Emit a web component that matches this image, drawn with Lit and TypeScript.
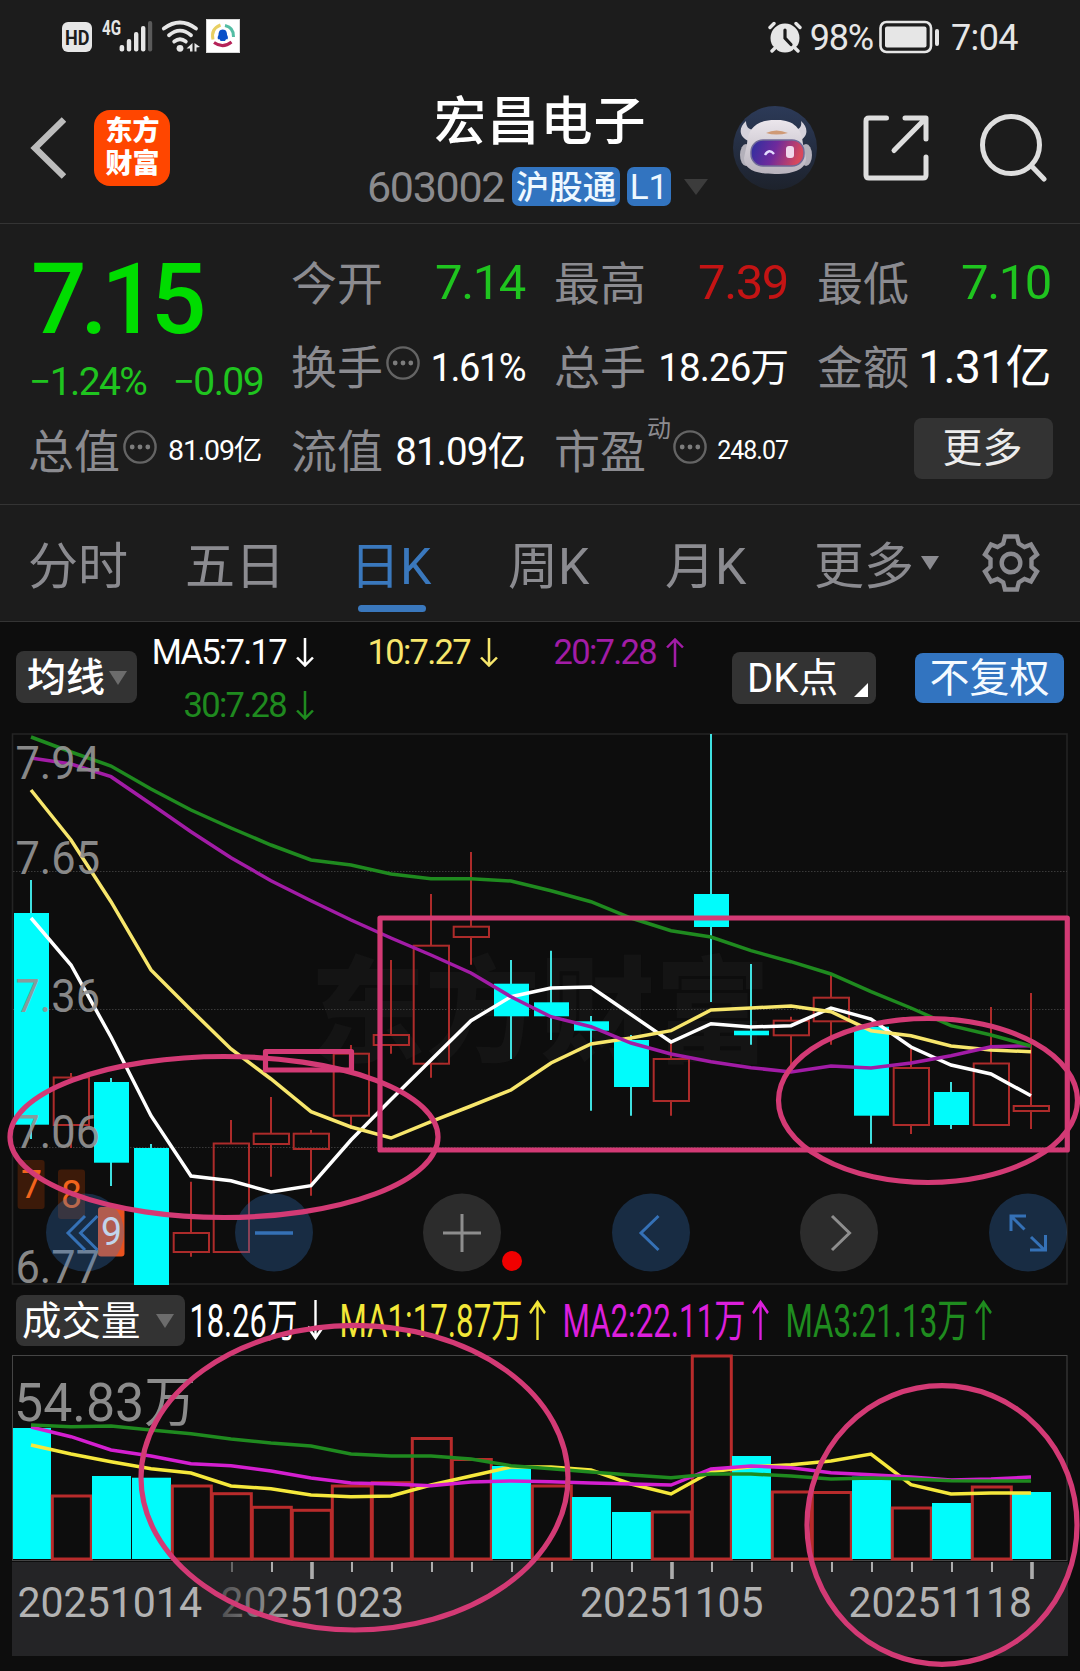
import { LitElement, html, css, svg } from "lit";
import { customElement, property } from "lit/decorators.js";

const FONT = css`Roboto, "Noto Sans CJK SC", sans-serif`;

/** x position of the nth trading day */
const cx = (i: number) => 31 + 40 * i;

type Candle = [up: 0 | 1, high: number, top: number, bottom: number, low: number];

const CANDLES: Candle[] = [
  [0, 880, 913, 1124.7, 1139], [1, 1073, 1077.5, 1125, 1148], [0, 1078, 1082, 1162.7, 1186],
  [0, 1144, 1148, 1285, 1285], [1, 1181.7, 1233, 1252, 1256.7], [1, 1120, 1143.5, 1252, 1252],
  [1, 1097, 1133.7, 1144, 1176.7], [1, 1130, 1133.7, 1149, 1195.7], [1, 1045, 1053.7, 1115.7, 1129],
  [1, 960, 1035, 1045, 1053.7], [1, 894, 945.7, 1063.7, 1077.7], [1, 852, 926.7, 937, 964.7],
  [0, 960, 983.7, 1016.3, 1059], [0, 950.7, 1002.3, 1016.3, 1040], [0, 1016, 1021.3, 1030.7, 1110.7],
  [0, 1035, 1040, 1087, 1115.7], [1, 1042, 1059, 1101, 1115.7], [0, 734, 894, 927, 1002],
  [0, 964, 1030.7, 1035.3, 1044.7], [1, 1016.7, 1020.7, 1035.3, 1067], [1, 975, 997.7, 1021.3, 1044.7],
  [0, 1026, 1026.7, 1115.7, 1143.7], [1, 1049, 1068, 1125, 1134], [0, 1082, 1092, 1125, 1129],
  [1, 1007, 1063.5, 1125, 1125], [1, 993, 1106, 1111, 1129],
];

const PRICE_LINES: [string, number[]][] = [
  ["#ffffff", [918, 965, 1037, 1115.7, 1176, 1180.7, 1192, 1185.7, 1140, 1099.5, 1060, 1020.7, 996.7, 988, 987, 1014.5, 1042, 1023.7, 1027, 1025.7, 1008, 1019, 1047, 1065, 1074, 1095.7]],
  ["#f7e66c", [790, 840, 901.7, 970, 1010, 1049, 1079, 1111.7, 1127, 1138, 1121.7, 1106, 1090, 1063, 1044, 1038, 1030.7, 1010, 1008, 1006, 1011.7, 1030.7, 1035.7, 1046, 1050, 1051.7]],
  ["#a21ca6", [758, 764, 776.7, 804, 831.7, 857.7, 880.7, 900.7, 920, 938, 955, 973, 996.7, 1016.7, 1026.7, 1043, 1054, 1061.7, 1067.7, 1072, 1066, 1068, 1063, 1055.7, 1046.7, 1045.7]],
  ["#1f8a1f", [737, 752, 766, 789, 810, 828, 845, 860, 865, 874, 878.7, 878.7, 881, 890.7, 901.7, 918, 930.7, 937, 950.7, 961.7, 974, 991.7, 1008, 1025.7, 1035, 1046]],
];

/** [up, top] for each volume bar */
const VOLUMES: [0 | 1, number][] = [
  [0, 1428], [1, 1496], [0, 1476], [0, 1477.7], [1, 1486], [1, 1493.7], [1, 1507.3], [1, 1510.3],
  [1, 1486], [1, 1482.7], [1, 1438.5], [1, 1459.5], [0, 1466], [1, 1486], [0, 1497], [0, 1512],
  [1, 1512], [1, 1356], [0, 1456], [1, 1492], [1, 1492.5], [0, 1476.7], [1, 1508], [0, 1503],
  [1, 1487], [0, 1492],
];

const VOLUME_LINES: [string, number[]][] = [
  ["#f5e83c", [1445, 1454, 1461.7, 1468.7, 1473, 1486, 1488.7, 1495, 1496.7, 1496, 1485, 1476, 1467, 1467, 1470, 1484, 1494, 1471.7, 1466.7, 1464.7, 1461, 1454, 1484.7, 1494, 1493, 1493]],
  ["#d41fd0", [1427, 1436.7, 1450, 1456, 1463.7, 1465.7, 1471, 1478, 1483, 1484, 1485.7, 1482, 1481, 1481.7, 1483, 1484, 1485, 1469, 1466, 1467.7, 1472.7, 1474.7, 1477, 1480, 1479, 1477]],
  ["#1f8a1f", [1425, 1426.7, 1426, 1430, 1433.7, 1439, 1443, 1446, 1454, 1456, 1456, 1459, 1465.7, 1468.7, 1472, 1475, 1477.7, 1474, 1474, 1476, 1479, 1478, 1479, 1480.7, 1481, 1481]],
];

const polyline = ([color, ys]: [string, number[]]) => svg`
  <polyline fill="none" stroke=${color} stroke-width="3.500" points=${ys.map((y, i) => `${cx(i)},${y}`).join(" ")} />`;

const label = (x: number, y: number, size: number, len: number, text: string, fill: string) => svg`
  <text x=${x} y=${y} font-size=${size} textLength=${len} lengthAdjust="spacingAndGlyphs" fill=${fill}>${text}</text>`;

const arrow = (up: boolean, width: number, height: number) => html`
  <svg width=${width} height=${height} viewBox="0 0 17 29" preserveAspectRatio="none" fill="none" stroke="currentColor" stroke-width="2.4">
    ${up ? svg`<path d="M8.5 29V1.5M1 9.5L8.5 1.5L16 9.5" />` : svg`<path d="M8.5 0V27.5M1 19.5L8.5 27.5L16 19.5" />`}
  </svg>`;

const dots = html`
  <svg class="dots" width="34" height="34" viewBox="0 0 34 34">
    <circle cx="17" cy="17" r="15.6" fill="none" stroke="#646464" stroke-width="2.4" />
    <g fill="#7c7c7c"><circle cx="9.2" cy="17" r="2.4" /><circle cx="17" cy="17" r="2.4" /><circle cx="24.8" cy="17" r="2.4" /></g>
  </svg>`;

@customElement("status-bar")
class StatusBar extends LitElement {
  static styles = css`
    :host { display: flex; height: 72px; box-sizing: border-box; padding: 19px 62px 0 62px; font-family: ${FONT}; color: #e6e6e6; }
    .left { flex: 1; }
    .left svg { overflow: visible; }
    .right { display: flex; align-items: center; height: 35px; font-size: 36px; line-height: 35px; }
    .pct { margin: 3px 6px 0 8px; letter-spacing: -1.2px; }
    .time { margin: 3px 0 0 11px; letter-spacing: -0.6px; }
    text { font-family: ${FONT}; }
  `;
  render() {
    return html`
      <div class="left">
        <svg width="180" height="36" viewBox="62 19 180 36" fill="#e6e6e6">
          <rect x="62" y="22" width="30" height="30" rx="6" />
          <text x="65" y="44.500" font-size="19.500" font-weight="700" fill="#1c1c1c" textLength="24.500" lengthAdjust="spacingAndGlyphs">HD</text>
          <text x="102" y="35" font-size="20" font-weight="700" textLength="19" lengthAdjust="spacingAndGlyphs">4G</text>
          <rect x="119.6" y="45" width="4.6" height="6.5" rx="2" />
          <rect x="126.8" y="39" width="4.4" height="12.5" rx="2" />
          <rect x="134" y="32" width="4.4" height="19.5" rx="2" />
          <rect x="141" y="26" width="4.4" height="25.5" rx="2" />
          <rect x="148" y="21" width="4.2" height="30.5" rx="2" fill="#5a5a5a" />
          <g fill="none" stroke="#e6e6e6" stroke-width="3.8" stroke-linecap="round">
            <path d="M163.8 28.5Q180 16.500 196 28.500" />
            <path d="M169 35.200Q180 26 191 35.200" />
            <path d="M174.200 41.500Q180 37 185.800 41.500" />
          </g>
          <circle cx="180" cy="48.300" r="3.400" />
          <path d="M192.500 43V51.500H190V48.500H186.500ZM194.500 51.500V43L200 47L196.500 47.500V51.500Z" />
          <rect x="206.500" y="19.500" width="33" height="33" fill="#fff" stroke="#d8d8d8" />
          <g fill="none" stroke-width="3">
            <path d="M220.500 25Q210.500 29 213 39.500" stroke="#e8cf62" />
            <path d="M225 25.500Q234 27.500 233.500 37" stroke="#53bda4" />
            <path d="M214 42.500Q223 49 231.500 42" stroke="#b52258" />
          </g>
          <path d="M222.800 29.500c3.600 0 4.200 3 4.300 5.400c1 1.800 1 3 .5 4.400h-1.600l-1 1.600h-4.400l-1-1.600h-1.600c-.5-1.400-.5-2.600 .5-4.400c.1-2.400 .7-5.400 4.300-5.400z" fill="#0a50c8" />
        </svg>
      </div>
      <div class="right">
        <svg width="34" height="32" viewBox="0 0 34 32">
          <circle cx="17" cy="17" r="14.500" fill="#e6e6e6" />
          <path d="M1.500 7L6.500 2M32.500 7L27.500 2M4 30L7 27M30 30L27 27" stroke="#1c1c1c" stroke-width="6" />
          <path d="M2 6.500L6 2.500M32 6.500L28 2.500M4 30L7 27M30 30L27 27" stroke="#e6e6e6" stroke-width="3.400" stroke-linecap="round" />
          <path d="M17 9V17L23 23.500" fill="none" stroke="#1c1c1c" stroke-width="3.200" stroke-linecap="round" />
        </svg>
        <span class="pct">98%</span>
        <svg width="61" height="34" viewBox="0 0 61 34">
          <rect x="1.500" y="2" width="50.500" height="30" rx="6" fill="none" stroke="#e6e6e6" stroke-width="2.600" />
          <rect x="6" y="6.500" width="41.500" height="21" rx="2" fill="#e6e6e6" />
          <rect x="56" y="9" width="4" height="17" rx="2" fill="#e6e6e6" />
        </svg>
        <span class="time">7:04</span>
      </div>`;
  }
}

@customElement("stock-header")
class StockHeader extends LitElement {
  static styles = css`
    :host { display: grid; grid-template-columns: 340px 392.500px 1fr; height: 151px; border-bottom: 1px solid #343434; font-family: ${FONT}; }
    .left, .right { display: flex; align-items: center; }
    .left { padding-left: 30px; gap: 28px; }
    .logo { display: grid; width: 76px; height: 76px; box-sizing: border-box; padding: 1px 0 0 1px; align-content: center; justify-content: center; border-radius: 16px; background: #ff4600; color: #fff; font-size: 27px; line-height: 33px; font-weight: 900; }
    .center { display: flex; flex-direction: column; }
    .name { margin: 22px 0 0 94px; height: 56px; line-height: 58px; font-size: 52px; font-weight: 500; letter-spacing: 1.200px; color: #fff; white-space: nowrap; }
    .meta { display: flex; align-items: center; margin: 17px 0 0 27px; height: 39px; }
    .code { width: 145px; font-size: 43px; line-height: 41px; margin-top: 2px; letter-spacing: -1.300px; color: #8b8b8e; }
    .badge { height: 39px; box-sizing: border-box; border-radius: 7px; background: #3274c0; color: #eef8ff; font-size: 33.500px; line-height: 41px; text-align: center; font-weight: 500; }
    .hk { width: 108px; }
    .l1 { width: 44px; margin: 0 12px 0 7px; font-weight: 400; font-size: 35px; line-height: 41px; }
    .robot { margin-right: 46.500px; }
    .share { margin-right: 50.500px; }
  `;
  render() {
    return html`
      <div class="left">
        <svg width="36" height="62" viewBox="0 0 36 62" fill="none" stroke="#bcbcbc" stroke-width="6.500"><path d="M34 2.500L5 31L34 59.500" /></svg>
        <div class="logo"><span>东方</span><span>财富</span></div>
      </div>
      <div class="center">
        <div class="name">宏昌电子</div>
        <div class="meta">
          <span class="code">603002</span>
          <span class="badge hk">沪股通</span><span class="badge l1">L1</span>
          <svg width="26" height="18" viewBox="0 0 26 18"><path d="M1 1H25L13 17Z" fill="#3c3c3c" /></svg>
        </div>
      </div>
      <div class="right">
        <svg class="robot" width="84" height="84" viewBox="0 0 84 84">
          <defs>
            <linearGradient id="sky" x1="0" y1="0" x2="0" y2="1"><stop offset="0" stop-color="#2c3a58" /><stop offset="1" stop-color="#1d222c" /></linearGradient>
            <linearGradient id="visor" x1="0" y1="0" x2="1" y2="0.200"><stop offset="0" stop-color="#2b30a0" /><stop offset=".5" stop-color="#6e2a9c" /><stop offset="1" stop-color="#d8485c" /></linearGradient>
            <linearGradient id="shell" x1="0" y1="0" x2="0" y2="1"><stop offset="0" stop-color="#ebe6ec" /><stop offset="1" stop-color="#b8b3bd" /></linearGradient>
          </defs>
          <circle cx="42" cy="42" r="42" fill="url(#sky)" />
          <path d="M13 15C5 22 6 31 16 35L22 24C15 24 13 20 13 15ZM68 15C76 22 75 31 66 35L61 24C67 24 69 20 68 15Z" fill="#d5d2dc" />
          <ellipse cx="13" cy="49" rx="6" ry="11" fill="#b3b0ba" /><ellipse cx="73" cy="49" rx="6" ry="11" fill="#b3b0ba" />
          <path d="M42 14C60 13 69 22 70 38L73 52C73 62 64 68 42 68C20 68 11 62 11 52L14 38C15 22 24 14 42 14Z" fill="url(#shell)" />
          <path d="M33 27Q43 22 55 27Q43 30 33 27Z" fill="#cf9a76" />
          <rect x="18" y="34" width="53" height="26" rx="12" fill="url(#visor)" stroke="#6f6a98" stroke-width="1.500" />
          <path d="M32 49Q36 42 41 48" fill="none" stroke="#e4dcff" stroke-width="2.400" />
          <rect x="53" y="40" width="8" height="12" rx="3" fill="#f0d8ec" />
        </svg>
        <svg class="share" width="66" height="66" viewBox="0 0 66 66" fill="none" stroke="#dedede" stroke-width="5" stroke-linecap="round" stroke-linejoin="round">
          <path d="M23.500 3H6Q3 3 3 6V60Q3 63 6 63H60Q63 63 63 60V42M42 3H63V24M62 4L31 35.500" />
        </svg>
        <svg width="67" height="68" viewBox="0 0 67 68" fill="none" stroke="#dedede" stroke-width="5" stroke-linecap="round">
          <circle cx="31" cy="31" r="28.500" /><path d="M52 52.500L64 65" />
        </svg>
      </div>`;
  }
}

@customElement("quote-cell")
class QuoteCell extends LitElement {
  @property() name = "";
  @property() value = "";
  @property() sup = "";
  @property({ type: Boolean }) info = false;
  @property() size = "l";
  @property() tone = "";
  static styles = css`
    :host { display: flex; align-items: center; height: 84px; font-family: ${FONT}; white-space: nowrap; }
    .name { font-size: 46px; line-height: 80px; color: #8b8b90; margin: 5px 0 0 -1px; }
    .dots { margin: -5px 0 0 3px; }
    .sup { font-size: 24px; line-height: 24px; margin: -41px -1px 0 1px; color: #8b8b90; }
    .value { flex: 1; text-align: right; color: #fff; line-height: 80px; }
    .l { font-size: 49px; letter-spacing: -1.400px; margin: 3px 1px 0 0; }
    .m { font-size: 46px; letter-spacing: -0.600px; margin: 3px 1px 0 0; }
    .p { font-size: 38px; letter-spacing: -1.500px; margin: 4px 1px 0 0; }
    .s { font-size: 38.500px; letter-spacing: -0.900px; margin: 4px 1px 0 0; }
    .xs { font-size: 28.500px; letter-spacing: -1.200px; margin: 2px 2px 0 0; }
    .xxs { font-size: 25px; letter-spacing: -1px; margin: 2px 1px 0 0; }
    .up { color: #c41414; }
    .down { color: #1fc41f; }
  `;
  render() {
    return html`
      <span class="name">${this.name}</span>
      ${this.sup ? html`<span class="sup">${this.sup}</span>` : ""}
      ${this.info ? dots : ""}
      <span class="value ${this.size} ${this.tone}">${this.value}</span>`;
  }
}

@customElement("quote-panel")
class QuotePanel extends LitElement {
  static styles = css`
    :host { display: grid; grid-template-columns: repeat(4, 234px); grid-template-rows: repeat(3, 84px); column-gap: 29px; height: 281px; box-sizing: border-box; padding: 15.500px 29px 0; border-bottom: 1px solid #343434; font-family: ${FONT}; }
    .price { grid-row: span 2; display: flex; flex-direction: column; }
    .last { height: 117px; line-height: 119px; padding-left: 2px; font-size: 98px; font-weight: 500; letter-spacing: -6.300px; color: #00dc00; }
    .change { display: flex; justify-content: space-between; font-size: 39px; line-height: 50px; letter-spacing: -1.600px; color: #1fc41f; }
    .more { justify-self: end; align-self: center; width: 139px; height: 61px; margin: -2px -1px 0 0; box-sizing: border-box; border-radius: 8px; background: #333; color: #ececec; font-size: 40px; line-height: 62px; text-align: center; padding-right: 2px; }
  `;
  render() {
    return html`
      <div class="price">
        <span class="last">7.15</span>
        <div class="change"><span>−1.24%</span><span>−0.09</span></div>
      </div>
      <quote-cell name="今开" value="7.14" tone="down"></quote-cell>
      <quote-cell name="最高" value="7.39" tone="up"></quote-cell>
      <quote-cell name="最低" value="7.10" tone="down"></quote-cell>
      <quote-cell name="换手" info value="1.61%" size="p"></quote-cell>
      <quote-cell name="总手" value="18.26万" size="s"></quote-cell>
      <quote-cell name="金额" value="1.31亿" size="m"></quote-cell>
      <quote-cell name="总值" info value="81.09亿" size="xs"></quote-cell>
      <quote-cell name="流值" value="81.09亿" size="s"></quote-cell>
      <quote-cell name="市盈" sup="动" info value="248.07" size="xxs"></quote-cell>
      <div class="more">更多</div>`;
  }
}

@customElement("period-tabs")
class PeriodTabs extends LitElement {
  static styles = css`
    :host { display: flex; align-items: center; height: 117px; box-sizing: border-box; padding-left: 28px; border-bottom: 1px solid #343434; font-family: ${FONT}; font-size: 50px; color: #8b8b90; white-space: nowrap; }
    .tab { height: 116px; line-height: 124px; box-sizing: border-box; }
    .t0 { width: 157px; }
    .t1 { width: 165px; }
    .t2 { width: 158px; }
    .t3 { width: 157px; }
    .t4 { width: 149px; }
    .t5 { width: 107px; }
    .active { display: flex; flex-direction: column; color: #3a78bd; }
    .active .label { height: 100px; }
    .bar { width: 68px; height: 7px; margin-left: 8px; border-radius: 4px; background: #3a78bd; }
    .caret { margin: 0 43px 0 0; }
  `;
  render() {
    const tabs = ["分时", "五日", "日K", "周K", "月K", "更多"];
    return html`
      ${tabs.map((t, i) => i === 2
        ? html`<div class="tab t2 active"><span class="label">${t}</span><span class="bar"></span></div>`
        : html`<div class="tab t${i}">${t}</div>`)}
      <svg class="caret" width="18" height="14" viewBox="0 0 18 14"><path d="M0 0H18L9 14Z" fill="#8b8b90" /></svg>
      <svg width="58" height="60" viewBox="-29 -30 58 60" fill="none" stroke="#8b8b90" stroke-width="4.400">
        <path d="M-6 -26.500H6L7.800 -19.500L13.500 -16L20 -18.500L26 -8.500L20.500 -4V4L26 8.500L20 18.500L13.500 16L7.800 19.500L6 26.500H-6L-7.800 19.500L-13.500 16L-20 18.500L-26 8.500L-20.500 4V-4L-26 -8.500L-20 -18.500L-13.500 -16L-7.800 -19.500Z" />
        <circle r="9.300" />
      </svg>`;
  }
}

@customElement("ma-legend")
class MaLegend extends LitElement {
  static styles = css`
    :host { display: flex; height: 100px; box-sizing: border-box; padding: 0 16px; font-family: ${FONT}; color: #fff; white-space: nowrap; }
    .btn { display: flex; align-items: center; box-sizing: border-box; border-radius: 8px; background: #333; font-size: 39px; line-height: 50px; height: 52px; padding-top: 2px; }
    .ma { width: 121px; margin-top: 29px; padding-left: 11px; gap: 4px; font-weight: 500; }
    .values { display: grid; grid-template-columns: 177px 184px 186px; grid-template-rows: 53px 53px; justify-items: end; width: 547px; margin-top: 4px; font-size: 34.500px; line-height: 53px; letter-spacing: -1.700px; }
    .v { display: flex; align-items: center; gap: 10px; }
    .v svg { margin-top: -1px; }
    .white { color: #fff; }
    .yellow { color: #f7e66c; }
    .purple { color: #a21ca6; }
    .green { color: #1f8a1f; }
    .dk { width: 144px; margin: 30px 39px 0 48px; padding: 2px 8px 0 15px; justify-content: space-between; font-size: 40px; }
    .dk svg { margin-top: 22px; }
    .fq { width: 149px; height: 50px; margin-top: 31px; justify-content: center; background: #3274c0; font-size: 40px; line-height: 48px; color: #f4faff; }
  `;
  render() {
    return html`
      <div class="btn ma">均线<svg width="18" height="14" viewBox="0 0 18 14"><path d="M0 0H18L9 14Z" fill="#6c6c6c" /></svg></div>
      <div class="values">
        <span class="v white">MA5:7.17${arrow(false, 18, 29)}</span>
        <span class="v yellow">10:7.27${arrow(false, 18, 29)}</span>
        <span class="v purple">20:7.28${arrow(true, 18, 29)}</span>
        <span class="v green">30:7.28${arrow(false, 18, 29)}</span>
      </div>
      <div class="btn dk">DK点<svg width="14" height="14" viewBox="0 0 14 14"><path d="M14 0V14H0Z" fill="#fff" /></svg></div>
      <div class="btn fq">不复权</div>`;
  }
}

@customElement("price-chart")
class PriceChart extends LitElement {
  static styles = css`
    :host { display: block; height: 568px; }
    svg { display: block; overflow: visible; font-family: ${FONT}; }
  `;
  render() {
    return html`
      <svg width="1080" height="568" viewBox="0 722 1080 568">
        <text x="310" y="1053" font-size="115" font-weight="900" fill="#141414" textLength="460">东方财富</text>
        <rect x="12.500" y="734" width="1054.500" height="550" fill="none" stroke="#242424" stroke-width="1.600" />
        ${[871.5, 1009.5, 1147.5].map((y) => svg`<path d="M13 ${y}H1067" stroke="#3a3a3a" stroke-width="1" stroke-dasharray="1.500 1.500" />`)}
        ${CANDLES.map(([up, high, top, bottom, low], i) => up
          ? svg`<g fill="none" stroke="#ac2b2a" stroke-width="2">
              <path d="M${cx(i)} ${high}V${top}M${cx(i)} ${bottom}V${low}" />
              <rect x=${cx(i) - 17.3} y=${top} width="35.300" height=${bottom - top} /></g>`
          : svg`<path d="M${cx(i)} ${high}V${low}" stroke="#3fe0e0" stroke-width="2" />
              <rect x=${cx(i) - 17} y=${top} width="35" height=${bottom - top} fill="#00fcfc" />`)}
        ${PRICE_LINES.map(polyline)}
        <g>
          <rect x="17.600" y="1160" width="27" height="49" rx="3" fill="#3c1a09" />
          <rect x="58" y="1169.500" width="27" height="49.500" rx="3" fill="#3c1a09" />
          <rect x="98" y="1207" width="26.500" height="49.500" rx="3" fill="#e8521f" />
          ${label(21, 1198, 38, 21, "7", "#f2641c")}
          ${label(61, 1208, 38, 21, "8", "#f2641c")}
          ${label(101, 1245, 38, 21, "9", "#ffffff")}
        </g>
        <g opacity=".92">
          ${label(15.5, 778.7, 45.5, 84.5, "7.94", "#939393")}
          ${label(15.5, 873.5, 45.5, 84.5, "7.65", "#939393")}
          ${label(15.5, 1012, 45.5, 84.5, "7.36", "#939393")}
          ${label(15.5, 1148.3, 45.5, 84.5, "7.06", "#939393")}
          ${label(15.5, 1283, 45.5, 84.5, "6.77", "#939393")}
        </g>
        <g fill="rgb(50 116 192 / .3)">
          <circle cx="85" cy="1232.500" r="39" />
          <circle cx="274" cy="1232.500" r="39" />
          <circle cx="651" cy="1232.500" r="39" />
          <circle cx="1028" cy="1232.500" r="39" />
        </g>
        <g fill="rgb(255 255 255 / .13)"><circle cx="462" cy="1232.500" r="39" /><circle cx="839" cy="1232.500" r="39" /></g>
        <g fill="none" stroke="#3571b6" stroke-width="3">
          <path d="M85 1216L68 1233L85 1250M97.500 1216L80.500 1233L97.500 1250" />
          <path d="M255 1233H293" stroke-width="3.600" />
          <path d="M658.500 1216L641 1233L658.500 1250" />
          <path d="M1011 1231V1216H1026M1011.500 1216.500L1024.500 1229.500M1031 1237L1045 1250.500M1030 1250H1045.500V1235" />
        </g>
        <g fill="none" stroke="#8e8e8e" stroke-width="3"><path d="M443 1233H481M462 1214V1252" /><path d="M832 1216L849.500 1233L832 1250" /></g>
        <circle cx="512" cy="1261" r="10" fill="#f00000" />
      </svg>`;
  }
}

@customElement("volume-legend")
class VolumeLegend extends LitElement {
  static styles = css`
    :host { display: flex; align-items: center; height: 60px; box-sizing: border-box; padding: 0 16px; font-family: ${FONT}; }
    .btn { display: flex; align-items: center; justify-content: space-between; width: 169px; height: 51px; box-sizing: border-box; padding: 2px 11px 0 6px; border-radius: 8px; background: #333; color: #fff; font-size: 39.500px; line-height: 49px; }
    svg { display: block; overflow: visible; font-family: ${FONT}; }
    .item { display: flex; align-items: center; gap: 6.500px; }
    .i0 { width: 149.500px; margin-left: 4px; gap: 9px; color: #fff; }
    .i1 { width: 223px; color: #f3e738; }
    .i2 { width: 223px; color: #dc1fdc; }
    .i3 { color: #1f8c1f; }
  `;
  item(cls: string, text: string, width: number, up: boolean) {
    const squeeze = 0.69;
    return html`<span class="item ${cls}">
      <svg width=${width} height="54" viewBox="0 0 ${width} 54">
        <g transform="translate(0.500 43.500) scale(${squeeze} 1)">${label(0, 0, 45.5, (width - 1) / squeeze, text, "currentColor")}</g>
      </svg>
      ${arrow(up, 17, 40)}</span>`;
  }
  render() {
    return html`
      <div class="btn">成交量<svg width="18" height="14" viewBox="0 0 18 14"><path d="M0 0H18L9 14Z" fill="#6c6c6c" /></svg></div>
      ${this.item("i0", "18.26万", 109, false)}
      ${this.item("i1", "MA1:17.87万", 184, true)}
      ${this.item("i2", "MA2:22.11万", 184, true)}
      ${this.item("i3", "MA3:21.13万", 184, true)}`;
  }
}

@customElement("volume-chart")
class VolumeChart extends LitElement {
  static styles = css`
    :host { display: block; height: 321px; }
    svg { display: block; font-family: ${FONT}; }
  `;
  render() {
    const ticks = Array.from({ length: 21 }, (_, k) => k + 5);
    return html`
      <svg width="1080" height="321" viewBox="0 1350 1080 321">
        <defs><linearGradient id="fade" gradientUnits="userSpaceOnUse" x1="215" y1="0" x2="300" y2="0"><stop offset="0" stop-color="#48484a" /><stop offset="1" stop-color="#b2b2b2" /></linearGradient></defs>
        <rect x="12.500" y="1355.500" width="1054.500" height="205" fill="none" stroke="#454545" stroke-width="1" />
        ${label(14, 1420.5, 54.5, 182, "54.83万", "#8c8c8c")}
        ${VOLUMES.map(([up, top], i) => up
          ? svg`<rect x=${cx(i) - 18.7} y=${top} width="39" height=${1559 - top} fill="none" stroke="#b82b2b" stroke-width="3" />`
          : svg`<rect x=${i ? cx(i) - 19 : 13} y=${top} width=${i ? 39 : 38} height=${1559 - top} fill="#00fcfc" />`)}
        ${VOLUME_LINES.map(polyline)}
        <rect x="12" y="1562" width="1056" height="94" fill="#242426" />
        ${ticks.map((i) => {
          const major = i % 9 === 7;
          return svg`<rect x=${cx(i) + (major ? -0.8 : 0)} y="1562" width=${major ? 3.6 : 2} height=${major ? 17 : 10} fill=${i === 5 ? "#666" : "#adadad"} />`;
        })}
        ${label(17.5, 1617.3, 42.5, 184.5, "20251014", "#b2b2b2")}
        ${label(220.5, 1617.3, 42.5, 183.5, "20251023", "url(#fade)")}
        ${label(580, 1617.3, 42.5, 183.5, "20251105", "#b2b2b2")}
        ${label(848.5, 1617.3, 42.5, 183.5, "20251118", "#b2b2b2")}
      </svg>`;
  }
}

@customElement("app-root")
class AppRoot extends LitElement {
  static styles = css`
    :host { display: block; position: relative; width: 1080px; height: 1671px; overflow: hidden; background: #0d0d0d; }
    .top { background: #1c1c1c; }
    .marks { position: absolute; left: 0; top: 0; pointer-events: none; }
  `;
  render() {
    return html`
      <div class="top">
        <status-bar></status-bar>
        <stock-header></stock-header>
        <quote-panel></quote-panel>
        <period-tabs></period-tabs>
      </div>
      <ma-legend></ma-legend>
      <price-chart></price-chart>
      <volume-legend></volume-legend>
      <volume-chart></volume-chart>
      <svg class="marks" width="1080" height="1671" viewBox="0 0 1080 1671" fill="none" stroke="#d33a75" stroke-width="5.200" stroke-linejoin="round">
        <rect x="380" y="918" width="687.300" height="232" />
        <rect x="265.500" y="1051.500" width="86" height="18.500" />
        <ellipse cx="224" cy="1137" rx="214" ry="80.500" />
        <ellipse cx="928" cy="1100.500" rx="149.500" ry="82" />
        <ellipse cx="354.500" cy="1477.700" rx="213.500" ry="152.300" />
        <ellipse cx="942" cy="1525" rx="135" ry="139.300" />
      </svg>`;
  }
}
